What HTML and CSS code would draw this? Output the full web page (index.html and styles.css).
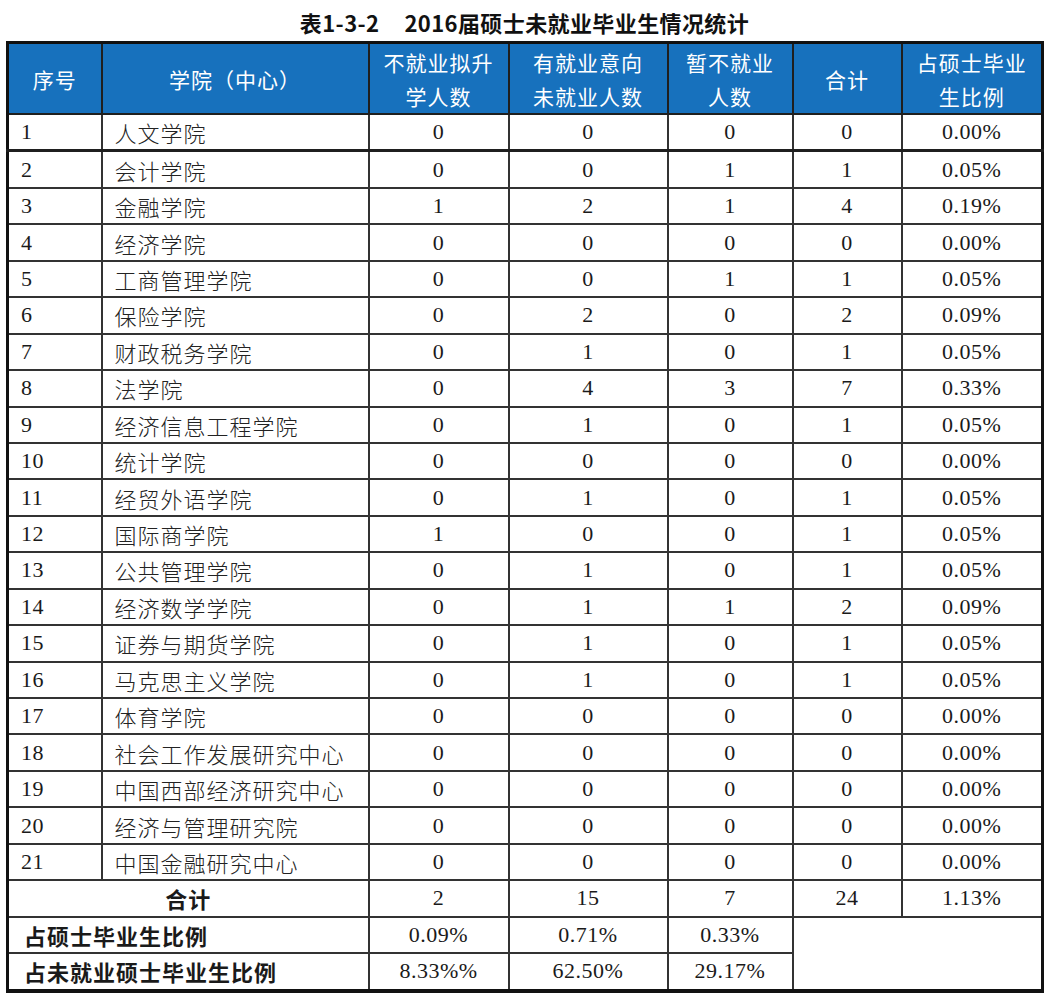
FILE: index.html
```html
<!DOCTYPE html>
<html lang="zh-CN">
<head>
<meta charset="utf-8">
<title>表1-3-2 2016届硕士未就业毕业生情况统计</title>
<link rel="stylesheet" href="styles.css">
</head>
<body>
<div class="page">
  <h1 class="title"><span class="tno">表1-3-2</span><span>2016届硕士未就业毕业生情况统计</span></h1>
  <table class="stats">
    <colgroup>
      <col class="c1"><col class="c2"><col class="c3"><col class="c4"><col class="c5"><col class="c6"><col class="c7">
    </colgroup>
    <thead>
      <tr>
        <th>序号</th>
        <th>学院（中心）</th>
        <th>不就业拟升<br>学人数</th>
        <th>有就业意向<br>未就业人数</th>
        <th>暂不就业<br>人数</th>
        <th>合计</th>
        <th>占硕士毕业<br>生比例</th>
      </tr>
    </thead>
    <tbody>
      <tr class="first"><td class="no">1</td><td class="name">人文学院</td><td>0</td><td>0</td><td>0</td><td>0</td><td>0.00%</td></tr>
      <tr><td class="no">2</td><td class="name">会计学院</td><td>0</td><td>0</td><td>1</td><td>1</td><td>0.05%</td></tr>
      <tr><td class="no">3</td><td class="name">金融学院</td><td>1</td><td>2</td><td>1</td><td>4</td><td>0.19%</td></tr>
      <tr><td class="no">4</td><td class="name">经济学院</td><td>0</td><td>0</td><td>0</td><td>0</td><td>0.00%</td></tr>
      <tr><td class="no">5</td><td class="name">工商管理学院</td><td>0</td><td>0</td><td>1</td><td>1</td><td>0.05%</td></tr>
      <tr><td class="no">6</td><td class="name">保险学院</td><td>0</td><td>2</td><td>0</td><td>2</td><td>0.09%</td></tr>
      <tr><td class="no">7</td><td class="name">财政税务学院</td><td>0</td><td>1</td><td>0</td><td>1</td><td>0.05%</td></tr>
      <tr><td class="no">8</td><td class="name">法学院</td><td>0</td><td>4</td><td>3</td><td>7</td><td>0.33%</td></tr>
      <tr><td class="no">9</td><td class="name">经济信息工程学院</td><td>0</td><td>1</td><td>0</td><td>1</td><td>0.05%</td></tr>
      <tr><td class="no">10</td><td class="name">统计学院</td><td>0</td><td>0</td><td>0</td><td>0</td><td>0.00%</td></tr>
      <tr><td class="no">11</td><td class="name">经贸外语学院</td><td>0</td><td>1</td><td>0</td><td>1</td><td>0.05%</td></tr>
      <tr><td class="no">12</td><td class="name">国际商学院</td><td>1</td><td>0</td><td>0</td><td>1</td><td>0.05%</td></tr>
      <tr><td class="no">13</td><td class="name">公共管理学院</td><td>0</td><td>1</td><td>0</td><td>1</td><td>0.05%</td></tr>
      <tr><td class="no">14</td><td class="name">经济数学学院</td><td>0</td><td>1</td><td>1</td><td>2</td><td>0.09%</td></tr>
      <tr><td class="no">15</td><td class="name">证券与期货学院</td><td>0</td><td>1</td><td>0</td><td>1</td><td>0.05%</td></tr>
      <tr><td class="no">16</td><td class="name">马克思主义学院</td><td>0</td><td>1</td><td>0</td><td>1</td><td>0.05%</td></tr>
      <tr><td class="no">17</td><td class="name">体育学院</td><td>0</td><td>0</td><td>0</td><td>0</td><td>0.00%</td></tr>
      <tr><td class="no">18</td><td class="name">社会工作发展研究中心</td><td>0</td><td>0</td><td>0</td><td>0</td><td>0.00%</td></tr>
      <tr><td class="no">19</td><td class="name">中国西部经济研究中心</td><td>0</td><td>0</td><td>0</td><td>0</td><td>0.00%</td></tr>
      <tr><td class="no">20</td><td class="name">经济与管理研究院</td><td>0</td><td>0</td><td>0</td><td>0</td><td>0.00%</td></tr>
      <tr><td class="no">21</td><td class="name">中国金融研究中心</td><td>0</td><td>0</td><td>0</td><td>0</td><td>0.00%</td></tr>
      <tr><td class="total" colspan="2">合计</td><td>2</td><td>15</td><td>7</td><td>24</td><td>1.13%</td></tr>
      <tr><td class="label" colspan="2">占硕士毕业生比例</td><td>0.09%</td><td>0.71%</td><td>0.33%</td><td class="blank" colspan="2" rowspan="2"></td></tr>
      <tr class="last"><td class="label" colspan="2">占未就业硕士毕业生比例</td><td>8.33%%</td><td>62.50%</td><td>29.17%</td></tr>
    </tbody>
  </table>
</div>
</body>
</html>
```

FILE: styles.css
```css
html, body {
  margin: 0;
  padding: 0;
  background: #ffffff;
}

.page {
  padding: 0 7px 0 6px;
}

.title {
  margin: 0;
  height: 41px;
  padding-top: 5px;
  box-sizing: border-box;
  display: flex;
  justify-content: center;
  gap: 25px;
  font-family: "Noto Sans CJK SC", "Liberation Sans", sans-serif;
  font-weight: 700;
  font-size: 22px;
  line-height: 34px;
  letter-spacing: 0.4px;
  color: #111111;
  white-space: nowrap;
}

.stats {
  width: 1037px;
  table-layout: fixed;
  border-collapse: collapse;
  border: 3px solid #111111;
  border-bottom-width: 4px;
  font-family: "Liberation Serif", "Noto Sans CJK SC", serif;
  font-size: 22px;
  color: #1a1a1a;
}

.c1 { width: 94px; }
.c2 { width: 267px; }
.c3 { width: 140px; }
.c4 { width: 159px; }
.c5 { width: 125px; }
.c6 { width: 109px; }
.c7 { width: 141px; }

.stats th {
  background: #1771bd;
  color: #ffffff;
  font-family: "Noto Sans CJK SC", "Liberation Sans", sans-serif;
  font-weight: 400;
  font-size: 21px;
  line-height: 34px;
  height: 69px;
  padding: 0;
  border: 2px solid #1f1f1f;
  text-align: center;
  vertical-align: middle;
  letter-spacing: 1px;
}

.stats td {
  height: 34.45px;
  padding: 0;
  border: 2px solid #333333;
  text-align: center;
  vertical-align: middle;
  line-height: 32px;
  letter-spacing: 0.5px;
  white-space: nowrap;
}

.stats tr.first td {
  border-bottom: 3px solid #1f1f1f;
}

.stats td.no {
  text-align: left;
  padding-left: 12px;
}

.stats td.name {
  text-align: left;
  padding-left: 12px;
  font-family: "Noto Sans CJK SC", sans-serif;
  font-weight: 300;
  letter-spacing: 1px;
  color: #222222;
}

.stats td.total {
  font-family: "Noto Sans CJK SC", sans-serif;
  font-weight: 700;
  letter-spacing: 1px;
}

.stats td.label {
  text-align: left;
  padding-left: 15px;
  font-family: "Noto Sans CJK SC", sans-serif;
  font-weight: 700;
  letter-spacing: 1px;
}

.stats td.blank {
  background: #ffffff;
}
```
